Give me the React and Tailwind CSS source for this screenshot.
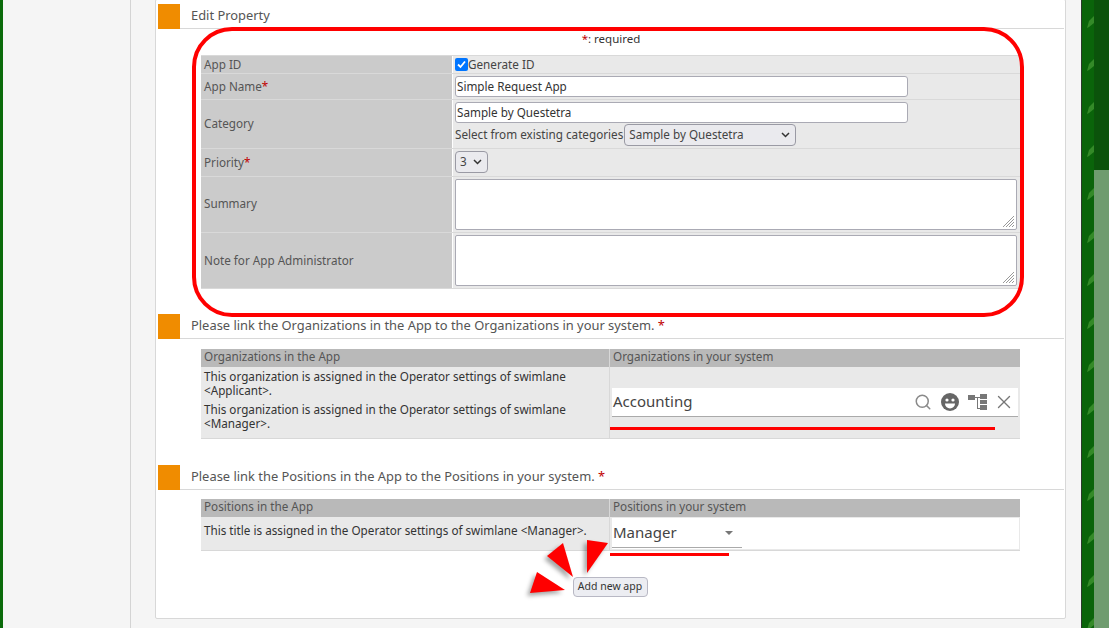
import { Search, X } from "lucide-react";

const font = { fontFamily: '"Noto Sans", sans-serif' };

const Required = () => <span className="text-[#c00000]">*</span>;

const SectionTitle = ({ children, className = "" }) => (
  <div className={`flex h-[25px] border-b border-[#d8d8d8] ${className}`}>
    <div className="w-[22px] h-[25px] bg-[#f08c00]" />
    <div className="ml-[11px] text-[12.9px] leading-[23px] text-[#555]">{children}</div>
  </div>
);

const Row = ({ label, className, children }) => (
  <div className={`flex border-b border-[#d9d9d9] ${className}`}>
    <div className="w-[251px] shrink-0 flex items-center bg-[#cbcbcb] pl-[3px] text-[#555]">{label}</div>
    <div className="flex-1 ml-px bg-[#e9e9e9] pl-[2px] pr-[3px]">{children}</div>
  </div>
);

const TextBox = ({ value }) => (
  <div className="w-[453px] h-[21px] rounded-[3px] border border-[#aaaab4] bg-white pl-[1px] leading-[19px] text-[#333]">{value}</div>
);

const TextArea = ({ className }) => (
  <div className={`relative rounded-[2px] border border-[#aaaab4] bg-white ${className}`}>
    <svg className="absolute right-[1px] bottom-[1px]" width="13" height="13" viewBox="0 0 13 13" stroke="#999" fill="none">
      <path d="M1 12 12 1M4 12 12 4M7 12 12 7M10 12 12 10" />
    </svg>
  </div>
);

const SelectBox = ({ value, className }) => (
  <div className={`flex items-center justify-between rounded-[4px] border border-[#9a9aa4] bg-[#eaeaee] pl-[4px] pr-[5px] h-[22px] text-[#444] ${className}`}>
    <span>{value}</span>
    <svg width="9" height="6" viewBox="0 0 9 6" fill="none" stroke="#333" strokeWidth="1.5"><path d="M1 1l3.5 3.5L8 1" /></svg>
  </div>
);

const Mapping = ({ left, right, bodyClass, children }) => (
  <div className="ml-[43px] mr-[44px]">
    <div className="flex h-[18px] bg-[#b9b9b9] leading-[15px] text-[#555]">
      <div className="w-[409px] pl-[3px] border-r border-[#d8d8d8]">{left}</div>
      <div className="pl-[3px]">{right}</div>
    </div>
    <div className={`flex bg-[#e9e9e9] border-b border-[#d8d8d8] ${bodyClass}`}>{children}</div>
  </div>
);

const Leaves = () => (
  <div className="flex flex-col gap-[29px] pt-[15px] pl-[4px]">
    {Array.from({ length: 15 }).map((_, i) => (
      <svg key={i} width="9" height="14" viewBox="0 0 9 14" className="shrink-0">
        <path d="M1 13 L3 6 L8 1 L8 8 L3 12 Z" fill="#348a28" />
      </svg>
    ))}
  </div>
);

export default function App() {
  return (
    <div className="relative flex h-[628px] w-[1109px] overflow-hidden bg-[#f5f5f5]" style={font}>
      <div className="w-[3px] bg-[#0a6a0a]" />
      <div className="w-[128px] border-r border-[#d4d4d4]" />
      <main className="ml-[24px] mt-[-1px] w-[911px] h-[620px] border border-[#d8d8d8] rounded-[2px] bg-white pl-[2px] pr-[1px] pt-[4px] text-[11.7px]">
        <SectionTitle>Edit Property</SectionTitle>
        <div className="h-[26px] pt-[2px] text-center text-[11.5px] leading-[16px] text-[#333]">
          <span className="text-[#c00000]">*</span>: required
        </div>
        <div className="ml-[43px] mr-[44px] border-t border-[#d9d9d9]">
          <Row label="App ID" className="h-[18px]">
            <div className="flex items-center h-[17px]">
              <span className="flex h-[13px] w-[13px] items-center justify-center rounded-[2px] bg-[#0075ff]">
                <svg width="11" height="11" viewBox="0 0 11 11" fill="none" stroke="#fff" strokeWidth="1.8"><path d="M2 5.5 4.5 8 9 2.5" /></svg>
              </span>
              <span className="text-[#444]">Generate ID</span>
            </div>
          </Row>
          <Row label={<>App Name<Required /></>} className="h-[26px]">
            <div className="pt-[2px]"><TextBox value="Simple Request App" /></div>
          </Row>
          <Row label="Category" className="h-[49px]">
            <div className="pt-[2px]"><TextBox value="Sample by Questetra" /></div>
            <div className="flex items-center mt-[1px] text-[#444]">
              <span>Select from existing categories</span>
              <SelectBox value="Sample by Questetra" className="ml-px w-[172px]" />
            </div>
          </Row>
          <Row label={<>Priority<Required /></>} className="h-[28px]">
            <div className="pt-[2px]"><SelectBox value="3" className="w-[33px]" /></div>
          </Row>
          <Row label={<span className="pb-[2px]">Summary</span>} className="h-[56px]">
            <TextArea className="mt-[2px] h-[51px]" />
          </Row>
          <Row label="Note for App Administrator" className="h-[56px]">
            <TextArea className="mt-[2px] h-[51px]" />
          </Row>
        </div>

        <SectionTitle className="mt-[25px] mb-[10px]">
          Please link the Organizations in the App to the Organizations in your system. <Required />
        </SectionTitle>
        <Mapping left="Organizations in the App" right="Organizations in your system" bodyClass="h-[72px]">
          <div className="w-[409px] pl-[3px] pt-[2px] border-r border-[#d8d8d8] leading-[14px] text-[#333]">
            <p>This organization is assigned in the Operator settings of swimlane &lt;Applicant&gt;.</p>
            <p className="mt-[5px]">This organization is assigned in the Operator settings of swimlane &lt;Manager&gt;.</p>
          </div>
          <div className="flex-1 pl-[2px] pr-[2px] pt-[21px]">
            <div className="flex items-center h-[29px] bg-white border-b border-[#aaa] pl-[1px] pr-[3px] text-[15px] text-[#444]">
              <span className="flex-1 pb-[2px]">Accounting</span>
              <Search size={18} strokeWidth={2} className="text-[#8a8a8a]" />
              <svg className="ml-[9px]" width="18" height="18" viewBox="0 0 18 18">
                <circle cx="9" cy="9" r="9" fill="#666" />
                <circle cx="6" cy="7" r="1.6" fill="#fff" />
                <circle cx="12" cy="7" r="1.6" fill="#fff" />
                <path d="M4 10.5h10a5 5 0 0 1-10 0z" fill="#fff" />
              </svg>
              <svg className="ml-[9px]" width="19" height="16" viewBox="0 0 19 16" fill="#777">
                <rect x="0" y="1" width="7" height="5" />
                <rect x="12" y="0" width="7" height="5" />
                <rect x="12" y="6" width="7" height="4" />
                <rect x="12" y="11" width="7" height="5" />
                <path d="M7 3h5v1H10v10h2v1H9V4H7z" />
              </svg>
              <X size={22} strokeWidth={1.5} className="ml-[6px] text-[#777]" />
            </div>
          </div>
        </Mapping>

        <SectionTitle className="mt-[26px] mb-[9px]">
          Please link the Positions in the App to the Positions in your system. <Required />
        </SectionTitle>
        <Mapping left="Positions in the App" right="Positions in your system" bodyClass="h-[34px]">
          <div className="w-[409px] pl-[3px] pt-[6px] border-r border-[#d8d8d8] leading-[14px] text-[#333]">
            This title is assigned in the Operator settings of swimlane &lt;Manager&gt;.
          </div>
          <div className="flex-1 mt-px ml-[2px] mr-[1px] bg-white h-[31px]">
            <div className="flex items-center w-[130px] h-[30px] border-b border-[#aaa] pl-[1px] pr-[9px] text-[15px] text-[#444]">
              <span className="flex-1">Manager</span>
              <span className="h-0 w-0 border-x-[4px] border-t-[4px] border-x-transparent border-t-[#777]" />
            </div>
          </div>
        </Mapping>

        <div className="flex justify-center mt-[26px]">
          <button className="h-[20px] w-[75px] mr-[2px] rounded-[4px] border border-[#b8b8c4] bg-[#ecedf2] pb-[2px] text-[10.5px] leading-[15px] text-[#333]">
            Add new app
          </button>
        </div>
      </main>
      <div className="absolute right-0 top-0 flex h-full w-[28px] border-l border-[#2b3a2b] bg-[#0a640a]">
        <div className="w-[12px] overflow-hidden"><Leaves /></div>
        <div className="flex flex-1 flex-col bg-[#0b530b]">
          <div className="mt-[170px] flex-1 bg-[#6f9c6f]" />
        </div>
      </div>

      {/* annotations drawn over the page */}
      <div className="absolute left-[192px] top-[27px] h-[290px] w-[832px] rounded-[40px] border-4 border-[#ff0000]" />
      <div className="absolute left-[610px] top-[427px] h-[3px] w-[385px] bg-[#ff0000]" />
      <div className="absolute left-[610px] top-[553px] h-[3px] w-[119px] bg-[#ff0000]" />
      <svg className="absolute left-[520px] top-[530px]" width="100" height="75" viewBox="0 0 100 75" fill="#ff0000" style={{ filter: "drop-shadow(-3px 3px 2px rgba(0,0,0,.35))" }}>
        <path d="M67 10 88 13 67 43Z" />
        <path d="M43 13 27 26 53 47Z" />
        <path d="M17 42 45 60 10 63Z" />
      </svg>
    </div>
  );
}
